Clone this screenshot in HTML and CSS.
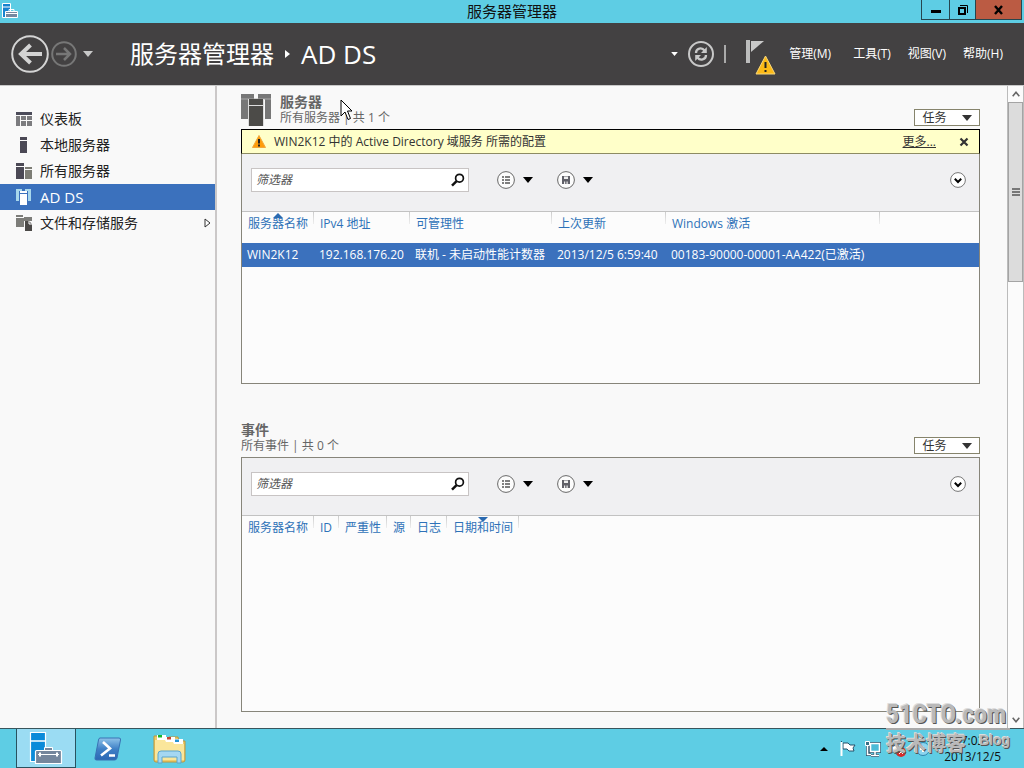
FILE: index.html
```html
<!DOCTYPE html>
<html lang="zh-CN">
<head>
<meta charset="utf-8">
<title>服务器管理器</title>
<link rel="stylesheet" href="styles.css">
</head>
<body>
<svg class="defs" aria-hidden="true">
  <symbol id="caret" viewBox="0 0 10 6"><path d="M0 0h10L5 6z" fill="currentColor"/></symbol>
  <symbol id="magnifier" viewBox="0 0 14 14"><circle cx="8.5" cy="5.2" r="3.9" fill="none" stroke="#111" stroke-width="1.7"/><path d="M5.6 8.2 1 12.6" stroke="#111" stroke-width="2.5"/></symbol>
  <symbol id="list" viewBox="0 0 18 18"><circle cx="9" cy="9" r="8.4" fill="#fcfcfc" stroke="#686868"/><path d="M5 6h2M5 9h2M5 12h2M8 6h5M8 9h5M8 12h5" stroke="#555" stroke-width="1.6"/></symbol>
  <symbol id="save" viewBox="0 0 18 18"><circle cx="9" cy="9" r="8.4" fill="#fcfcfc" stroke="#686868"/><path d="M5 5h8v8H5z" fill="#606068"/><path d="M7 5.5h4v2.6H7zM7 10.5h1.2V13H7zM9.5 10.5h1.2V13H9.500z" fill="#eee"/></symbol>
  <symbol id="expand" viewBox="0 0 16 16"><circle cx="8" cy="8" r="7.4" fill="#fff" stroke="#777"/><path d="m4.800 6.800 3.200 3.200 3.200-3.200" fill="none" stroke="#000" stroke-width="2"/></symbol>
</svg>

<header class="titlebar">
  <svg class="app-icon" viewBox="0 0 18 18"><path d="M1.500 1.500h8v14h-8z" fill="#1683cf" stroke="#fff"/><path d="M2 5h7" stroke="#fff"/><path d="M4.500 9.500h12v6h-12z" fill="#7588a0" stroke="#fff"/><path d="M8 9V7.500h5V9M4.500 11.500h12" fill="none" stroke="#fff"/></svg>
  <h1 class="window-title">服务器管理器</h1>
  <div class="window-buttons">
    <button class="win-btn" aria-label="最小化"><svg width="10" height="10"><path d="M0 5h10v3H0z"/></svg></button>
    <button class="win-btn win-restore" aria-label="还原"><svg width="10" height="10"><path d="M1 3h6v6H1z" fill="none" stroke="#000" stroke-width="2"/><path d="M2 .5h7.500V8" fill="none" stroke="#000"/></svg></button>
    <button class="win-btn win-close" aria-label="关闭"><svg width="10" height="10"><path d="m1 1 7 8M8 1 1 9" stroke="#000" stroke-width="2.400"/></svg></button>
  </div>
</header>

<div class="navbar">
  <div class="history">
    <button aria-label="后退"><svg width="38" height="38"><circle cx="19" cy="19" r="17.800" fill="none" stroke="#d4d4d4" stroke-width="2"/><path d="M31 19H10M19.500 10 10 19l9.500 9" fill="none" stroke="#d4d4d4" stroke-width="4"/></svg></button>
    <button aria-label="前进"><svg width="26" height="26"><circle cx="13" cy="13" r="11.800" fill="none" stroke="#777" stroke-width="2"/><path d="M5 13h14M13 7l6 6-6 6" fill="none" stroke="#777" stroke-width="2.500"/></svg></button>
    <button class="light-caret" aria-label="历史记录"><svg width="10" height="6"><use href="#caret"/></svg></button>
  </div>
  <nav class="crumbs" aria-label="位置">
    <span>服务器管理器</span>
    <svg width="5" height="8"><path d="M0 0v8l5-4z" fill="#fff"/></svg>
    <span class="crumb-latin">AD DS</span>
  </nav>
  <div class="nav-tools">
    <button class="white-caret" aria-label="刷新选项"><svg width="7" height="4"><use href="#caret"/></svg></button>
    <button aria-label="刷新"><svg width="26" height="26"><circle cx="13" cy="13" r="12" fill="none" stroke="#c8c8c8" stroke-width="2"/><path d="M8 12c0-5 6-6 8.500-2.500M18 14c0 5-6 6-8.500 2.500" fill="none" stroke="#c8c8c8" stroke-width="2.300"/><path d="M18.800 6v6H13zM7.200 20v-6H13z" fill="#c8c8c8"/></svg></button>
    <span class="divider"></span>
    <button class="notify" aria-label="通知"><svg width="30" height="36"><path d="M0 1h4v23H0z" fill="#bdbdbd"/><path d="M5 2h13L5 13z" fill="#c9c9c9"/><path d="M19.500 17 29 35H10z" fill="#fcba17" stroke="#f8d77b" stroke-linejoin="round"/><path d="M19.500 23v6M19.500 31v2" stroke="#222" stroke-width="2"/></svg></button>
  </div>
  <nav class="menus" aria-label="菜单">
    <button class="menu-first">管理(M)</button>
    <button>工具(T)</button>
    <button>视图(V)</button>
    <button>帮助(H)</button>
  </nav>
</div>

<div class="workspace">
  <nav class="sidebar" aria-label="服务器角色">
    <a class="side-item" href="#"><svg viewBox="0 0 16 16"><path d="M0 1h16v3H0z" fill="#4c4c5a"/><path d="M0 5h4v10H0zM5 5h5v4H5zM11 5h5v4h-5zM5 10h5v5H5zM11 10h5v5h-5z" fill="#7c7c7f"/></svg><span>仪表板</span></a>
    <a class="side-item" href="#"><svg viewBox="0 0 16 16"><path d="M4 0h7v3H4zM4 4h7v12H4z" fill="#4b4955"/></svg><span>本地服务器</span></a>
    <a class="side-item" href="#"><svg viewBox="0 0 16 16"><path d="M0 0h8v3H0zM0 4h8v12H0z" fill="#4b4955"/><path d="M9 4h7v2H9zM9 7h7v9H9z" fill="#7d7d75"/></svg><span>所有服务器</span></a>
    <a class="side-item selected" href="#" aria-current="page"><svg viewBox="0 0 16 16"><path d="M0 0h6v2H3v10H0zM9 0h6v12h-3V2H9z" fill="#a8d7ec"/><path d="M4 2h7v2H4zM4 5h7v11H4z" fill="#fff"/></svg><span>AD DS</span></a>
    <a class="side-item" href="#"><svg viewBox="0 0 16 16"><path d="M0 0h7v2H0zM0 3h8v9H0zM8 2h8v4H8z" fill="#7d7d79"/><path d="M9 6h4l3 3v7H9z" fill="#4b4947"/><path d="M13 6v3h3" stroke="#fff" fill="none"/></svg><span>文件和存储服务</span><svg class="side-arrow" viewBox="0 0 7 10"><path d="M1 1v8l5-4z" fill="#fff" stroke="#333"/></svg></a>
  </nav>

  <main class="content">
    <section class="section">
      <div class="section-head">
        <svg class="section-icon" viewBox="0 0 30 32"><path d="M0 0h13v5h-6v20H0z" fill="#777"/><path d="M17 0h13v25h-6V5h-7z" fill="#777"/><path d="M0 5h30" stroke="#aaa"/><path d="M8 5h14v27H8z" fill="#4c4b48"/><path d="M7.500 5v27M22.500 5v27M8 11.500h14" stroke="#ddd"/></svg>
        <div class="heading"><h2>服务器</h2><p>所有服务器 | 共 1 个</p></div>
        <button class="task-btn">任务<svg width="10" height="6"><use href="#caret"/></svg></button>
      </div>
      <div class="panel">
        <div class="alert">
          <svg width="14" height="13"><path d="M7 .5 13.500 12.500H.5z" fill="#ff9c0a" stroke="#f2a73b"/><path d="M7 4v4.500M7 9.500v2" stroke="#222" stroke-width="2"/></svg>
          <span>WIN2K12 中的 Active Directory 域服务 所需的配置</span>
          <a class="more" href="#">更多...</a>
          <button aria-label="关闭提示"><svg width="10" height="10"><path d="m1.500 1.500 7 7M8.500 1.500l-7 7" stroke="#333" stroke-width="2.200"/></svg></button>
        </div>
        <div class="toolbar">
          <label class="search"><input type="text" placeholder="筛选器" aria-label="筛选器"><svg width="14" height="14"><use href="#magnifier"/></svg></label>
          <button class="tool" aria-label="筛选条件"><svg width="18" height="18"><use href="#list"/></svg><svg width="10" height="6"><use href="#caret"/></svg></button>
          <button class="tool" aria-label="保存查询"><svg width="18" height="18"><use href="#save"/></svg><svg width="10" height="6"><use href="#caret"/></svg></button>
          <button class="tool expand" aria-label="展开"><svg width="16" height="16"><use href="#expand"/></svg></button>
        </div>
        <table class="grid">
          <colgroup><col class="w72"><col class="w96"><col class="w142"><col class="w114"><col class="w214"><col></colgroup>
          <thead><tr><th class="sorted">服务器名称<svg class="sort" width="10" height="5"><path d="M0 5h10L5 0z" fill="#2b6ab0"/></svg></th><th>IPv4 地址</th><th>可管理性</th><th>上次更新</th><th>Windows 激活</th><th class="rest"></th></tr></thead>
          <tbody><tr><td>WIN2K12</td><td>192.168.176.20</td><td>联机 - 未启动性能计数器</td><td>2013/12/5 6:59:40</td><td>00183-90000-00001-AA422(已激活)</td><td></td></tr></tbody>
        </table>
      </div>
    </section>

    <section class="section">
      <div class="section-head">
        <div class="heading"><h2>事件</h2><p>所有事件 | 共 0 个</p></div>
        <button class="task-btn">任务<svg width="10" height="6"><use href="#caret"/></svg></button>
      </div>
      <div class="panel">
        <div class="toolbar">
          <label class="search"><input type="text" placeholder="筛选器" aria-label="筛选器"><svg width="14" height="14"><use href="#magnifier"/></svg></label>
          <button class="tool" aria-label="筛选条件"><svg width="18" height="18"><use href="#list"/></svg><svg width="10" height="6"><use href="#caret"/></svg></button>
          <button class="tool" aria-label="保存查询"><svg width="18" height="18"><use href="#save"/></svg><svg width="10" height="6"><use href="#caret"/></svg></button>
          <button class="tool expand" aria-label="展开"><svg width="16" height="16"><use href="#expand"/></svg></button>
        </div>
        <table class="grid">
          <colgroup><col class="w72"><col class="w25"><col class="w48"><col class="w24"><col class="w36"><col class="w72"><col></colgroup>
          <thead><tr><th>服务器名称</th><th>ID</th><th>严重性</th><th>源</th><th>日志</th><th class="sorted">日期和时间<svg class="sort" width="10" height="5"><path d="M0 0h10L5 5z" fill="#2b6ab0"/></svg></th><th class="rest"></th></tr></thead>
        </table>
      </div>
    </section>
  </main>

  <div class="scrollbar">
    <button aria-label="向上滚动"><svg width="8" height="6"><path d="m.7 5.300 3.300-4 3.300 4" fill="none" stroke="#666" stroke-width="1.600"/></svg></button>
    <div class="thumb"><svg width="8" height="8"><path d="M0 1h8M0 4h8M0 7h8" stroke="#555" stroke-width="1.600"/></svg></div>
    <button class="scroll-down" aria-label="向下滚动"><svg width="8" height="6"><path d="m.7.7 3.300 4 3.300-4" fill="none" stroke="#666" stroke-width="1.600"/></svg></button>
  </div>
</div>

<footer class="taskbar">
  <button class="task-app active" aria-label="服务器管理器"><svg width="34" height="34"><path d="M1.500 1.500h15v29h-15z" fill="#0b8bd9" stroke="#fff" stroke-width="1.200"/><path d="M2 10h14" stroke="#fff" stroke-width="1.500"/><path d="M15.500 20v-3.500h8V20" fill="none" stroke="#fff"/><path d="M16 17h7v3h-7z" fill="#75869c"/><path d="M6.500 20.500q0-1 1-1h24q1 0 1 1v12h-26z" fill="#75869c" stroke="#fff" stroke-width="1.200"/><path d="M9 23.500h21" stroke="#fff"/><path d="M11 21.500v4M28 21.500v4" stroke="#fff" stroke-width="2"/></svg></button>
  <button class="task-app" aria-label="PowerShell"><svg width="30" height="26"><defs><linearGradient id="ps" x1="0" y1="0" x2="0" y2="1"><stop offset="0" stop-color="#8fc4ea"/><stop offset=".5" stop-color="#3f80c6"/><stop offset="1" stop-color="#2b67b4"/></linearGradient></defs><path d="M7 2h19q2 0 1.500 2L24 22q-.5 2-2.500 2h-18q-2 0-1.500-2L5.500 4q.3-2 1.500-2z" fill="url(#ps)" stroke="#3872b4"/><path d="m10 6 7 6.500-9 7M16 19.500h6" fill="none" stroke="#fff" stroke-width="2.600"/></svg></button>
  <button class="task-app" aria-label="文件资源管理器"><svg width="34" height="32"><path d="M1 3h11l1 3h3V4h9l1 4h6v19q0 2-2 2H3q-2 0-2-2z" fill="#f1cc6a" stroke="#bc973b"/><path d="M4 2h9v5H4z" fill="#fff"/><path d="M5 2h4v2.500H5z" fill="#17b629"/><path d="M12 4h10v5H12z" fill="#fff"/><path d="M14 4h4v2.500h-4z" fill="#c64634"/><path d="M20 6h10v5H20z" fill="#fff"/><path d="M22 6.500h4V9h-4z" fill="#2494d4"/><path d="M2 7h10l1 2h7l1 2h10v16H2z" fill="#fae69b"/><path d="M5 30V21q0-3 3-3h17q3 0 3 3v9h-4v-6H9v6z" fill="#a5d7f2" stroke="#5ba5cd"/></svg></button>
  <div class="tray">
    <button aria-label="显示隐藏的图标"><svg width="8" height="4"><path d="M0 4h8L4 0z"/></svg></button>
    <svg width="18" height="18"><path d="M2.500 1v15M4 3h5l2 2h5l-2 3 1 3h-5L8 9H4z" fill="#fff" stroke="#24506a"/><path d="M2.500 2v14" stroke="#fff" stroke-width="2"/></svg>
    <svg width="18" height="18"><path d="M6.500 3.500h9v8h-9z" fill="#4bbbd7" stroke="#24506a" stroke-width="3"/><path d="M11 12v3M7 15.500h8M3.500 6v8.500H7" fill="none" stroke="#24506a" stroke-width="3"/><path d="M6.500 3.500h9v8h-9z" fill="#4bbbd7" stroke="#fff" stroke-width="1.600"/><path d="M11 12v3M7 15.500h8M3.500 6v8.500H7" fill="none" stroke="#fff" stroke-width="1.600"/><path d="M1.500 1.500h4v4h-4z" fill="#336f87" stroke="#fff"/></svg>
    <svg width="18" height="18"><path d="M1 6h4l5-4v14l-5-4H1z" fill="#fff" stroke="#24506a"/><circle cx="12" cy="12" r="5" fill="#d32c2c"/><path d="m10 10 4 4M14 10l-4 4" stroke="#fff"/></svg>
    <svg width="18" height="18"><circle cx="9" cy="9" r="6.500" fill="#8bd5ef" stroke="#2e84ad"/><path d="M6 9h6M9 6v6" stroke="#fff" stroke-width="2"/></svg>
    <time class="clock">7:02<br>2013/12/5</time>
  </div>
</footer>

<svg class="cursor" viewBox="0 0 13 22"><path d="M1 1v16l4-4 3 7.500 2.500-1L7.500 12H12z" fill="#fff" stroke="#000"/></svg>
<div class="watermark"><div class="wm-site">51CTO.com</div><div class="wm-sub"><span>技术博客</span><span class="wm-blog">Blog</span></div></div>
</body>
</html>
```

FILE: styles.css
```css
* { box-sizing: border-box; }

body {
  margin: 0;
  height: 100vh;
  display: flex;
  flex-direction: column;
  background: #f9f9f9;
  color: #333;
  font: 12px/16px "Open Sans", "Noto Sans CJK SC", sans-serif;
}

button {
  padding: 0;
  border: 0;
  background: none;
  color: inherit;
  font: inherit;
  display: flex;
  align-items: center;
  justify-content: center;
}

svg { display: block; flex: none; }
h1, h2, p { margin: 0; font-weight: 400; }
.defs { position: absolute; width: 0; height: 0; }

.titlebar {
  display: grid;
  grid-template-columns: 1fr auto 1fr;
  height: 23px;
  flex: none;
  background: #5ecde4;
}
.app-icon { width: 18px; height: 18px; margin: 2px 0 0 1px; }
.window-title { color: #111; font-size: 15px; line-height: 22px; }
.window-buttons { display: flex; justify-content: flex-end; padding-right: 2px; height: 20px; }
.win-btn { width: 28px; border: 1px solid #26464e; border-top: 0; border-right: 0; }
.win-restore { width: 26px; }
.win-close { width: 47px; border-right: 1px solid #26464e; background: #bb5b43; }

.navbar {
  display: flex;
  align-items: center;
  height: 62px;
  flex: none;
  padding: 0 21px 0 11px;
  background: #434142;
  color: #fff;
}
.history { display: flex; align-items: center; gap: 2px; }
.light-caret { color: #c8c8c8; margin-left: 4px; }
.crumbs {
  display: flex;
  align-items: center;
  gap: 11px;
  margin-left: 37px;
  font-size: 24px;
  line-height: 32px;
  white-space: nowrap;
}
.crumb-latin { font-size: 26px; }
.nav-tools { display: flex; align-items: center; gap: 10px; margin-left: auto; }
.white-caret { color: #fff; }
.divider { width: 2px; height: 18px; background: #aaa; }
.notify { margin: 6px 0 0 10px; }
.menus { display: flex; gap: 17px; margin-left: 13px; white-space: nowrap; }
.menu-first { margin-right: 5px; }

.workspace { display: flex; flex: 1; min-height: 0; border-top: 1px solid #c9c9c9; }
.sidebar { width: 217px; flex: none; padding-top: 20px; border-right: 2px solid #cbc8c8; }
.side-item {
  display: flex;
  align-items: center;
  gap: 8px;
  height: 26px;
  padding: 0 4px 0 16px;
  color: #222;
  font-size: 14px;
  text-decoration: none;
}
.side-item svg { width: 16px; height: 16px; }
.side-item .side-arrow { width: 7px; height: 10px; margin-left: auto; }
.side-item.selected { background: #3b71bd; color: #fff; font-size: 15px; }

.content {
  flex: 1;
  min-width: 0;
  display: flex;
  flex-direction: column;
  gap: 30px;
  padding: 0 27px 16px 24px;
}
.section { flex: 1; display: flex; flex-direction: column; }
.section-head { display: flex; align-items: flex-end; gap: 9px; height: 43px; padding-bottom: 3px; }
.section-icon { width: 30px; height: 32px; }
.heading { color: #666; white-space: nowrap; }
.heading h2 { font-size: 14px; line-height: 16px; font-weight: 700; }
.task-btn {
  width: 66px;
  height: 17px;
  margin-left: auto;
  gap: 15px;
  border: 1px solid #86846c;
  background: #fff;
}

.panel { flex: 1; border: 1px solid #87857a; background: #fcfcfc; }
.alert {
  display: flex;
  align-items: center;
  height: 25px;
  margin: -1px -1px 0;
  padding: 0 10px;
  border: 1px solid #000;
  border-bottom-color: #8d8b63;
  background: #ffffc9;
  white-space: nowrap;
}
.alert span { margin-left: 8px; }
.alert .more { margin: 0 23px 0 auto; color: #333; }
.toolbar {
  display: flex;
  align-items: center;
  gap: 24px;
  padding: 14px 13px 19px 9px;
  background: #f0f0f2;
}
.search {
  display: flex;
  align-items: center;
  width: 218px;
  height: 24px;
  margin-right: 4px;
  padding: 0 3px 0 4px;
  border: 1px solid #c8c4c4;
  background: #fff;
}
.search input {
  flex: 1;
  min-width: 0;
  padding: 0;
  border: 0;
  outline: 0;
  background: none;
  font: inherit;
  font-style: italic;
}
.search input::placeholder { color: #555; opacity: 1; }
.tool { gap: 8px; color: #000; }
.expand { margin-left: auto; }

.grid { width: 100%; table-layout: fixed; border-collapse: collapse; border-top: 1px solid #c2c2c2; }
.grid th, .grid td { padding: 0 0 0 6px; text-align: left; font-weight: 400; white-space: nowrap; }
.grid th {
  height: 31px;
  padding-bottom: 6px;
  color: #2e72b8;
  background: linear-gradient(#ccc, #eee) right top / 1px 12px no-repeat;
}
.grid .rest { background: none; }
.grid td { height: 24px; padding-left: 5px; background: #3b71bd; color: #fff; }
.sorted { position: relative; }
.sort { position: absolute; top: 1px; left: 50%; margin-left: -5px; }
.w24 { width: 24px; }
.w25 { width: 25px; }
.w36 { width: 36px; }
.w48 { width: 48px; }
.w72 { width: 72px; }
.w96 { width: 96px; }
.w114 { width: 114px; }
.w142 { width: 142px; }
.w214 { width: 214px; }

.scrollbar {
  display: flex;
  flex-direction: column;
  width: 17px;
  flex: none;
  border: solid #bbb;
  border-width: 0 1px;
  background: #fbfbfb;
}
.scrollbar button { height: 16px; }
.scrollbar .scroll-down { margin-top: auto; }
.thumb {
  display: flex;
  align-items: center;
  justify-content: center;
  height: 28%;
  border: 1px solid #a4a4a4;
  background: #dcdcdc;
}

.taskbar {
  display: flex;
  height: 40px;
  flex: none;
  gap: 2px;
  padding-left: 16px;
  border-top: 1px solid #39555c;
  background: #5ecde4;
}
.task-app { width: 60px; }
.active { border: 1px solid #28525f; border-top: 0; background: #9bdcf3; }
.tray { display: flex; align-items: center; gap: 7px; margin-left: auto; padding-right: 23px; }
.tray > button { margin-right: 4px; }
.clock { margin-left: 5px; color: #111; text-align: center; }

.cursor { position: absolute; left: 340px; top: 99px; width: 13px; height: 22px; }
.watermark {
  position: absolute;
  right: 14px;
  bottom: 10px;
  width: 124px;
  color: #b9b9b9;
  font-weight: 700;
  white-space: nowrap;
  text-shadow: 1px 1px 0 #555, -1px -1px 0 #ddd;
}
.wm-site {
  border-bottom: 2px solid #aaa;
  font: 700 26px/28px "Roboto Condensed", "Liberation Sans Narrow", "Liberation Sans", sans-serif;
}
.wm-sub { display: flex; justify-content: space-between; font-size: 20px; line-height: 28px; }
.wm-blog { font: 700 14px/20px "Liberation Sans", sans-serif; }
```
